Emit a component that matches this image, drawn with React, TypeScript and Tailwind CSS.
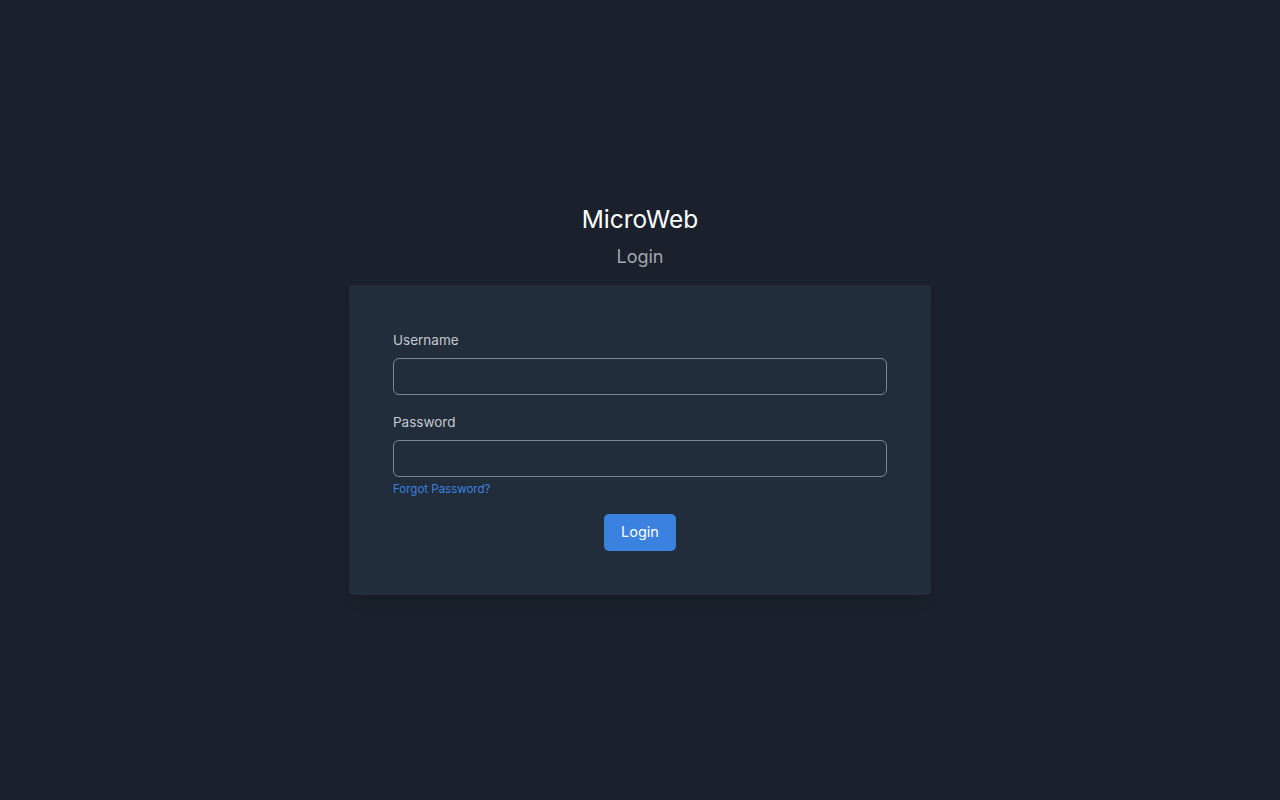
import React, { useState } from 'react';

const App: React.FC = () => {
    const [username, setUsername] = useState('');
    const [password, setPassword] = useState('');

    return (
        <div className="min-h-screen w-full bg-[#1b212c] flex flex-col items-center justify-center font-['Inter',sans-serif]">
            <h1 className="text-[24.5px] leading-[30px] text-white">MicroWeb</h1>
            <p className="mt-[9px] text-lg leading-7 text-[#a3a7ae]">Login</p>
            <form
                className="mt-[14px] mb-[2px] w-[582px] bg-[#222d3b] rounded pt-[45px] px-11 pb-11 shadow-lg flex flex-col"
                onSubmit={(e) => e.preventDefault()}
            >
                <label className="text-[13.5px] leading-5 text-[#c4c8ce]">Username</label>
                <input
                    type="text"
                    value={username}
                    onChange={(e) => setUsername(e.target.value)}
                    className="mt-2 h-[37px] w-full rounded-md border border-[#7b8491] bg-transparent px-3 text-sm text-white outline-none"
                />
                <label className="mt-[17px] text-[13.5px] leading-5 text-[#c4c8ce]">Password</label>
                <input
                    type="password"
                    value={password}
                    onChange={(e) => setPassword(e.target.value)}
                    className="mt-2 h-[37px] w-full rounded-md border border-[#7b8491] bg-transparent px-3 text-sm text-white outline-none"
                />
                <a href="#" className="mt-[5px] text-[11.5px] leading-[14px] text-[#3b82e0] self-start">Forgot Password?</a>
                <button
                    type="submit"
                    className="mt-[18px] self-center h-[37px] px-[17.5px] rounded-[5px] bg-[#3b82e0] text-[14.5px] text-white"
                >
                    Login
                </button>
            </form>
        </div>
    );
};

export default App;
